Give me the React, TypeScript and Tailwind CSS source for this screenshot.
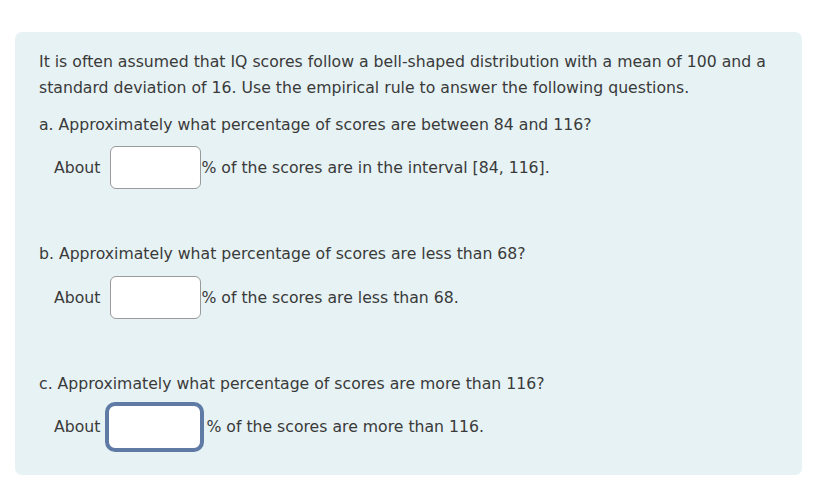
import React from "react";

function AnswerRow({ label, focused }: { label: string; focused?: boolean }) {
  return (
    <div className="flex items-center pl-[15px] h-[43px]">
      <span>About</span>
      {focused ? (
        <div className="ml-[5px] w-[99px] h-[50px] rounded-[10px] border-[4px] border-[#5f7aa4] bg-white" />
      ) : (
        <div className="ml-[10px] w-[91px] h-[43px] rounded-[6px] border border-[#9a9a9a] bg-white" />
      )}
      <span className={focused ? "ml-[2px]" : "ml-0"}>{label}</span>
    </div>
  );
}

export default function App() {
  return (
    <div className="min-h-screen bg-white pt-[32px] pl-[15px] pr-[13px] text-[#3a3a3a] font-['DejaVu_Sans',sans-serif] text-[15.7px]">
      <div className="w-[787px] h-[443px] rounded-[7px] bg-[#e6f2f4] px-[24px] pt-[17px]">
        <p className="leading-[26px] whitespace-nowrap">
          It is often assumed that IQ scores follow a bell-shaped distribution with a mean of 100 and a
          <br />
          standard deviation of 16. Use the empirical rule to answer the following questions.
        </p>

        <p className="mt-[11px] leading-[26px]">a. Approximately what percentage of scores are between 84 and 116?</p>
        <div className="mt-[8px]">
          <AnswerRow label="% of the scores are in the interval [84, 116]." />
        </div>

        <p className="mt-[52px] leading-[26px]">b. Approximately what percentage of scores are less than 68?</p>
        <div className="mt-[9px]">
          <AnswerRow label="% of the scores are less than 68." />
        </div>

        <p className="mt-[52px] leading-[26px]">c. Approximately what percentage of scores are more than 116?</p>
        <div className="mt-[8px]">
          <AnswerRow label="% of the scores are more than 116." focused />
        </div>
      </div>
    </div>
  );
}
